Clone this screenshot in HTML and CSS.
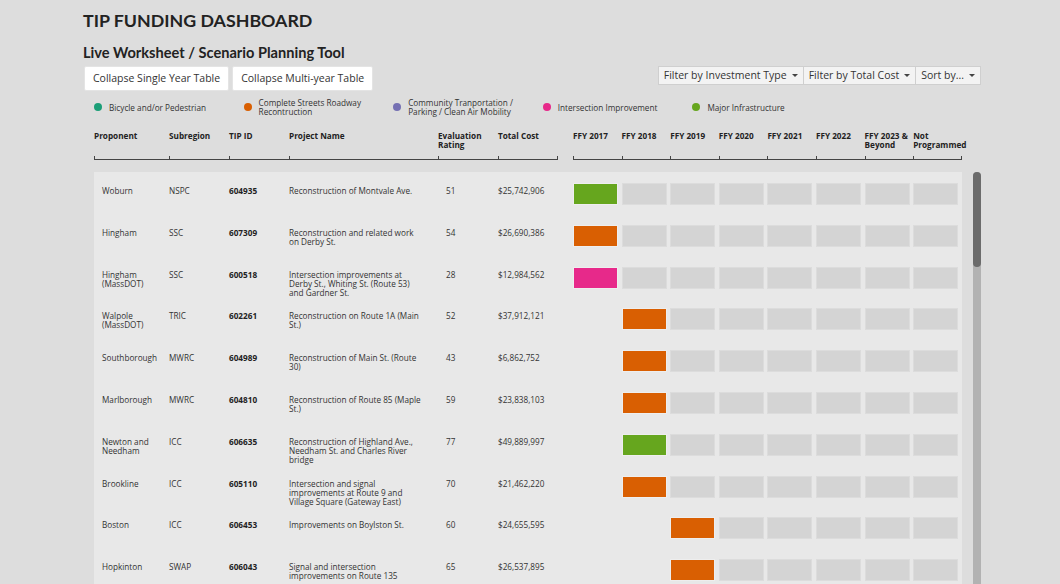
FILE: index.html
```html
<!DOCTYPE html>
<html>
<head>
<meta charset="utf-8">
<title>TIP Funding Dashboard</title>
<link rel="stylesheet" href="styles.css">
</head>
<body>
<div class="page">
  <h1 class="title">TIP FUNDING DASHBOARD</h1>
  <h2 class="subtitle">Live Worksheet / Scenario Planning Tool</h2>

  <div class="controls">
    <div class="btn-group">
      <button class="btn">Collapse Single Year Table</button>
      <button class="btn">Collapse Multi-year Table</button>
    </div>
    <div class="dropdowns">
      <div class="dd">Filter by Investment Type <span class="caret"></span></div>
      <div class="dd">Filter by Total Cost <span class="caret"></span></div>
      <div class="dd">Sort by... <span class="caret"></span></div>
    </div>
  </div>

  <div class="legend">
    <div class="legend-item"><span class="dot c-bike"></span><span class="legend-text">Bicycle and/or Pedestrian</span></div>
    <div class="legend-item"><span class="dot c-streets"></span><span class="legend-text">Complete Streets Roadway<br>Recontruction</span></div>
    <div class="legend-item"><span class="dot c-community"></span><span class="legend-text">Community Tranportation /<br>Parking / Clean Air Mobility</span></div>
    <div class="legend-item"><span class="dot c-intersection"></span><span class="legend-text">Intersection Improvement</span></div>
    <div class="legend-item"><span class="dot c-major"></span><span class="legend-text">Major Infrastructure</span></div>
  </div>

  <div class="grid head">
    <div>Proponent</div>
    <div>Subregion</div>
    <div>TIP ID</div>
    <div>Project Name</div>
    <div>Evaluation<br>Rating</div>
    <div>Total Cost</div>
    <div></div>
    <div>FFY 2017</div>
    <div>FFY 2018</div>
    <div>FFY 2019</div>
    <div>FFY 2020</div>
    <div>FFY 2021</div>
    <div>FFY 2022</div>
    <div>FFY 2023 &amp;<br>Beyond</div>
    <div>Not<br>Programmed</div>
  </div>

  <div class="grid axis">
    <div class="tick"></div><div class="tick"></div><div class="tick"></div><div class="tick"></div><div class="tick"></div><div class="tick end"></div>
    <div class="spacer"></div>
    <div class="tick"></div><div class="tick"></div><div class="tick"></div><div class="tick"></div><div class="tick"></div><div class="tick"></div><div class="tick"></div><div class="tick end"></div>
  </div>

  <div class="body">
    <div class="panel">
      <div class="grid row">
        <div class="cell prop">Woburn</div><div class="cell">NSPC</div><div class="cell id">604935</div>
        <div class="cell name">Reconstruction of Montvale Ave.</div><div class="cell rating">51</div><div class="cell">$25,742,906</div><div></div>
        <div class="yr"><span class="bar c-major"></span></div><div class="yr"><span class="bar"></span></div><div class="yr"><span class="bar"></span></div><div class="yr"><span class="bar"></span></div><div class="yr"><span class="bar"></span></div><div class="yr"><span class="bar"></span></div><div class="yr"><span class="bar"></span></div><div class="yr"><span class="bar"></span></div>
      </div>
      <div class="grid row">
        <div class="cell prop">Hingham</div><div class="cell">SSC</div><div class="cell id">607309</div>
        <div class="cell name">Reconstruction and related work<br>on Derby St.</div><div class="cell rating">54</div><div class="cell">$26,690,386</div><div></div>
        <div class="yr"><span class="bar c-streets"></span></div><div class="yr"><span class="bar"></span></div><div class="yr"><span class="bar"></span></div><div class="yr"><span class="bar"></span></div><div class="yr"><span class="bar"></span></div><div class="yr"><span class="bar"></span></div><div class="yr"><span class="bar"></span></div><div class="yr"><span class="bar"></span></div>
      </div>
      <div class="grid row">
        <div class="cell prop">Hingham<br>(MassDOT)</div><div class="cell">SSC</div><div class="cell id">600518</div>
        <div class="cell name">Intersection improvements at<br>Derby St., Whiting St. (Route 53)<br>and Gardner St.</div><div class="cell rating">28</div><div class="cell">$12,984,562</div><div></div>
        <div class="yr"><span class="bar c-intersection"></span></div><div class="yr"><span class="bar"></span></div><div class="yr"><span class="bar"></span></div><div class="yr"><span class="bar"></span></div><div class="yr"><span class="bar"></span></div><div class="yr"><span class="bar"></span></div><div class="yr"><span class="bar"></span></div><div class="yr"><span class="bar"></span></div>
      </div>
      <div class="grid row">
        <div class="cell prop">Walpole<br>(MassDOT)</div><div class="cell">TRIC</div><div class="cell id">602261</div>
        <div class="cell name">Reconstruction on Route 1A (Main<br>St.)</div><div class="cell rating">52</div><div class="cell">$37,912,121</div><div></div>
        <div class="yr"></div><div class="yr"><span class="bar c-streets"></span></div><div class="yr"><span class="bar"></span></div><div class="yr"><span class="bar"></span></div><div class="yr"><span class="bar"></span></div><div class="yr"><span class="bar"></span></div><div class="yr"><span class="bar"></span></div><div class="yr"><span class="bar"></span></div>
      </div>
      <div class="grid row">
        <div class="cell prop">Southborough</div><div class="cell">MWRC</div><div class="cell id">604989</div>
        <div class="cell name">Reconstruction of Main St. (Route<br>30)</div><div class="cell rating">43</div><div class="cell">$6,862,752</div><div></div>
        <div class="yr"></div><div class="yr"><span class="bar c-streets"></span></div><div class="yr"><span class="bar"></span></div><div class="yr"><span class="bar"></span></div><div class="yr"><span class="bar"></span></div><div class="yr"><span class="bar"></span></div><div class="yr"><span class="bar"></span></div><div class="yr"><span class="bar"></span></div>
      </div>
      <div class="grid row">
        <div class="cell prop">Marlborough</div><div class="cell">MWRC</div><div class="cell id">604810</div>
        <div class="cell name">Reconstruction of Route 85 (Maple<br>St.)</div><div class="cell rating">59</div><div class="cell">$23,838,103</div><div></div>
        <div class="yr"></div><div class="yr"><span class="bar c-streets"></span></div><div class="yr"><span class="bar"></span></div><div class="yr"><span class="bar"></span></div><div class="yr"><span class="bar"></span></div><div class="yr"><span class="bar"></span></div><div class="yr"><span class="bar"></span></div><div class="yr"><span class="bar"></span></div>
      </div>
      <div class="grid row">
        <div class="cell prop">Newton and<br>Needham</div><div class="cell">ICC</div><div class="cell id">606635</div>
        <div class="cell name">Reconstruction of Highland Ave.,<br>Needham St. and Charles River<br>bridge</div><div class="cell rating">77</div><div class="cell">$49,889,997</div><div></div>
        <div class="yr"></div><div class="yr"><span class="bar c-major"></span></div><div class="yr"><span class="bar"></span></div><div class="yr"><span class="bar"></span></div><div class="yr"><span class="bar"></span></div><div class="yr"><span class="bar"></span></div><div class="yr"><span class="bar"></span></div><div class="yr"><span class="bar"></span></div>
      </div>
      <div class="grid row">
        <div class="cell prop">Brookline</div><div class="cell">ICC</div><div class="cell id">605110</div>
        <div class="cell name">Intersection and signal<br>improvements at Route 9 and<br>Village Square (Gateway East)</div><div class="cell rating">70</div><div class="cell">$21,462,220</div><div></div>
        <div class="yr"></div><div class="yr"><span class="bar c-streets"></span></div><div class="yr"><span class="bar"></span></div><div class="yr"><span class="bar"></span></div><div class="yr"><span class="bar"></span></div><div class="yr"><span class="bar"></span></div><div class="yr"><span class="bar"></span></div><div class="yr"><span class="bar"></span></div>
      </div>
      <div class="grid row">
        <div class="cell prop">Boston</div><div class="cell">ICC</div><div class="cell id">606453</div>
        <div class="cell name">Improvements on Boylston St.</div><div class="cell rating">60</div><div class="cell">$24,655,595</div><div></div>
        <div class="yr"></div><div class="yr"></div><div class="yr"><span class="bar c-streets"></span></div><div class="yr"><span class="bar"></span></div><div class="yr"><span class="bar"></span></div><div class="yr"><span class="bar"></span></div><div class="yr"><span class="bar"></span></div><div class="yr"><span class="bar"></span></div>
      </div>
      <div class="grid row">
        <div class="cell prop">Hopkinton</div><div class="cell">SWAP</div><div class="cell id">606043</div>
        <div class="cell name">Signal and intersection<br>improvements on Route 135</div><div class="cell rating">65</div><div class="cell">$26,537,895</div><div></div>
        <div class="yr"></div><div class="yr"></div><div class="yr"><span class="bar c-streets"></span></div><div class="yr"><span class="bar"></span></div><div class="yr"><span class="bar"></span></div><div class="yr"><span class="bar"></span></div><div class="yr"><span class="bar"></span></div><div class="yr"><span class="bar"></span></div>
      </div>
    </div>
    <div class="scrollbar"><div class="thumb"></div></div>
  </div>
</div>
</body>
</html>
```

FILE: styles.css
```css
html, body {
  margin: 0;
  padding: 0;
  background: #dddddd;
  overflow: hidden;
  height: 584px;
}
body {
  font-family: "Open Sans", "Liberation Sans", sans-serif;
  color: #333;
}
.page {
  width: 897px;
  margin-left: 84px;
  padding-top: 9px;
}
.title {
  font-family: Lato, "Open Sans", sans-serif;
  font-weight: 700;
  font-size: 17.8px;
  line-height: 22px;
  margin: 0 0 0 -1px;
  color: #222;
}
.subtitle {
  font-family: Lato, "Open Sans", sans-serif;
  font-weight: 700;
  font-size: 14.6px;
  line-height: 18px;
  margin: 13px 0 0 -1px;
  color: #222;
}
.controls {
  display: flex;
  justify-content: space-between;
  align-items: flex-start;
  margin-top: 4px;
}
.btn-group {
  display: flex;
  gap: 3px;
}
.btn {
  font-family: "Open Sans", sans-serif;
  font-size: 10.5px;
  color: #333;
  background: #fff;
  border: 1px solid #e4e4e4;
  border-radius: 2px;
  height: 25px;
  padding: 0 8px;
  line-height: 23px;
  white-space: nowrap;
}
.dropdowns {
  display: flex;
  border: 1px solid #cfcfcf;
  background: #f3f3f3;
  height: 17px;
}
.dd {
  font-size: 10.5px;
  line-height: 17px;
  color: #333;
  padding: 0 5px;
  display: flex;
  align-items: center;
  gap: 5px;
  border-left: 1px solid #cfcfcf;
  white-space: nowrap;
}
.dd:first-child { border-left: none; }
.caret {
  display: inline-block;
  width: 0;
  height: 0;
  border-top: 3px solid #444;
  border-left: 3px solid transparent;
  border-right: 3px solid transparent;
}
.legend {
  display: flex;
  margin-top: 7px;
  margin-left: 10px;
  height: 18px;
  align-items: center;
}
.legend-item {
  width: 149.6px;
  display: flex;
  align-items: center;
  flex: none;
}
.dot {
  width: 8px;
  height: 8px;
  border-radius: 50%;
  margin-right: 7px;
  flex: none;
}
.legend-text {
  font-size: 8.2px;
  line-height: 9px;
  white-space: nowrap;
}
.c-bike { background: #1b9e77; }
.c-streets { background: #d95f02; }
.c-community { background: #7570b3; }
.c-intersection { background: #e7298a; }
.c-major { background: #66a61e; }

.grid {
  display: grid;
  grid-template-columns: 75px 60px 60px 149px 60px 60px 15px repeat(8, 48.6px);
  margin-left: 10px;
}
.head {
  margin-top: 15px;
  font-size: 8.2px;
  font-weight: 700;
  line-height: 9px;
  color: #222;
  height: 25px;
  white-space: nowrap;
}
.axis {
  height: 4px;
}
.tick {
  border-left: 1px solid #444;
  border-bottom: 1px solid #444;
}
.tick.end { border-right: 1px solid #444; }
.body {
  display: flex;
  margin-top: 12px;
  align-items: flex-start;
}
.panel {
  width: 868px;
  margin-left: 10px;
  background: #e8e8e8;
  padding-top: 11px;
  padding-bottom: 40px;
}
.panel .grid { margin-left: 0; }
.row {
  height: 41.8px;
  font-size: 8.2px;
  line-height: 9px;
  color: #333;
  white-space: nowrap;
}
.cell { padding-top: 3px; }
.prop { padding-left: 8px; }
.id { font-weight: 700; color: #222; }
.rating { padding-left: 8px; }
.yr { display: flex; }
.bar {
  display: block;
  width: 45px;
  height: 22px;
  box-sizing: border-box;
  background: #d4d4d4;
  border: 1px solid #dcdcdc;
}
.bar.c-major, .bar.c-streets, .bar.c-intersection {
  border-color: rgba(255,255,255,0.25);
  background-clip: padding-box;
}
.bar.c-major { background-color: #66a61e; }
.bar.c-streets { background-color: #d95f02; }
.bar.c-intersection { background-color: #e7298a; }
.scrollbar {
  width: 8px;
  margin-left: 11px;
  height: 440px;
  background: #b2b2b2;
  border-radius: 4px;
}
.thumb {
  height: 95px;
  background: #6b6b6b;
  border-radius: 4px;
}
```
